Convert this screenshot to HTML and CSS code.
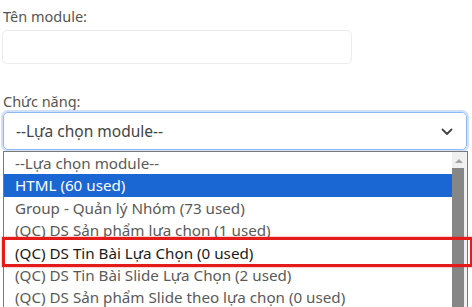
FILE: index.html
```html
<!DOCTYPE html>
<html>
<head>
	<title>Module</title>
	<link rel="stylesheet" href="styles.css">
</head>
<body>
	<form class="module-form">
		<div class="field">
			<label class="field-label">Tên module:</label>
			<input type="text" class="text-input">
		</div>

		<div class="field field-select">
			<label class="field-label">Chức năng:</label>
			<div class="select-box">
				<span>--Lựa chọn module--</span>
				<svg class="chevron" width="12" height="8" viewBox="0 0 12 8"><path d="M1.5 1.5 L6 6 L10.5 1.5" fill="none" stroke="#444" stroke-width="1.8" stroke-linecap="round" stroke-linejoin="round"/></svg>
			</div>

			<div class="dropdown">
				<ul class="options">
					<li>--Lựa chọn module--</li>
					<li class="selected">HTML (60 used)</li>
					<li>Group - Quản lý Nhóm (73 used)</li>
					<li>(QC) DS Sản phẩm lựa chọn (1 used)</li>
					<li class="marked">(QC) DS Tin Bài Lựa Chọn (0 used)</li>
					<li>(QC) DS Tin Bài Slide Lựa Chọn (2 used)</li>
					<li>(QC) DS Sản phẩm Slide theo lựa chọn (0 used)</li>
				</ul>
				<div class="scrollbar">
					<span class="arrow-up"></span>
					<span class="thumb"></span>
				</div>
				<div class="highlight-box"></div>
			</div>
		</div>
	</form>
</body>
</html>
```

FILE: styles.css
```css
body {
	margin: 0;
	background-color: #fff;
	font-family: "Noto Sans", "Open Sans", sans-serif;
	font-size: 14.5px;
	color: #555;
}

.module-form {
	padding: 6px 0 0 3px;
}

.field {
	display: flex;
	flex-direction: column;
	align-items: flex-start;
}

.field-label {
	line-height: 20px;
	margin-bottom: 4px;
}

.text-input {
	width: 350px;
	height: 34px;
	box-sizing: border-box;
	border: 1px solid #ececec;
	border-radius: 5px;
	margin: 0 0 0 -1px;
	padding: 0 12px;
}

.field-select {
	margin-top: 27px;
}

.field-select .field-label {
	margin-bottom: 1px;
}

.select-box {
	width: 464px;
	height: 38px;
	box-sizing: border-box;
	border: 1px solid #8fb8f0;
	border-radius: 5px;
	box-shadow: 0 0 0 2px #cfe0fa;
	display: flex;
	align-items: center;
	justify-content: space-between;
	padding: 0 13px 0 12px;
	font-size: 15.5px;
	color: #444;
}

.chevron {
	margin-top: 1px;
}

.dropdown {
	position: relative;
	margin-top: 1px;
	width: 465px;
	height: 160px;
	box-sizing: border-box;
	border: 1px solid #7a7a7a;
	border-bottom: none;
	background: #fff;
	display: flex;
	font-size: 15.2px;
}

.options {
	list-style: none;
	margin: 0;
	padding: 0;
	flex: 1;
}

.options li {
	height: 22.4px;
	line-height: 22px;
	padding-left: 11px;
	white-space: nowrap;
	color: #5a5a5a;
}

.options li.selected {
	background-color: #1a66d2;
	color: #fff;
}

.options li.marked {
	color: #1a1a1a;
}

.scrollbar {
	width: 15px;
	background: #f0f0f0;
	display: flex;
	flex-direction: column;
	align-items: flex-start;
}

.arrow-up {
	width: 0;
	height: 0;
	margin: 7px 0 0 3px;
	border-left: 4px solid transparent;
	border-right: 4px solid transparent;
	border-bottom: 4px solid #a3a3a3;
}

.thumb {
	width: 12px;
	flex: 1;
	margin-top: 5px;
	background: #868686;
}

.highlight-box {
	position: absolute;
	left: -2px;
	top: 85px;
	width: 471px;
	height: 30px;
	box-sizing: border-box;
	border: 3px solid #e31b1b;
	box-shadow: 0 0 2px rgba(227, 27, 27, 0.6);
}
```
